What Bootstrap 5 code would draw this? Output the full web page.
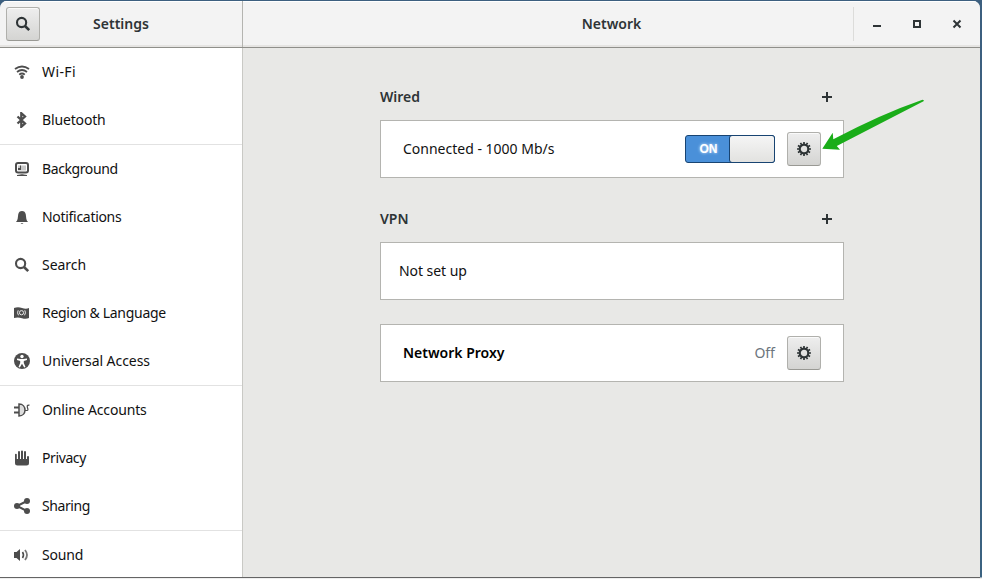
<!DOCTYPE html>
<html lang="en">
<head>
<meta charset="utf-8">
<title>Settings</title>
<link href="https://cdn.jsdelivr.net/npm/bootstrap@5.3.0/dist/css/bootstrap.min.css" rel="stylesheet">
<style>
body{font-family:"Noto Sans","Open Sans",sans-serif;font-size:14px;line-height:20px;color:#111;background:linear-gradient(#3c5f7f,#3b6280 577px,#eee 578px);height:579px;overflow:hidden}
.window{width:980px;height:577px;margin-top:1px;background:#e8e8e6;border-radius:7px 7px 0 0;border-bottom:1px solid #646464;overflow:hidden}
.titlebar{height:47px;background:#f3f3f3;border-bottom:1px solid #8f8f8a;box-shadow:inset 0 -2px #e5e4e2,inset 0 1px #fff;color:#2e3436;font-weight:600;flex:none}
.title-left{width:243px;border-right:1px solid #b4b4b0;padding-left:6px}
.title-left .caption{width:162px}
.tool{width:34px;height:34px;padding:0;border:1px solid #b0b0ac;border-bottom-color:#999994;border-radius:3px;background:linear-gradient(#eee,#d4d4d2);box-shadow:inset 0 1px #fafafa;color:#2e3436}
.controls{width:127px;height:34px;border-left:1px solid #dcdcda;padding-left:3px}
.controls span{width:40px;height:34px}
.side{width:243px;background:#fff;border-right:1px solid #c9c9c5;overflow:hidden}
.entry{height:48px;flex:none;padding-left:14px;color:#111;letter-spacing:-.3px}
.entry svg{width:16px;height:16px;color:#4d4d4d;margin-right:12px;flex:none}
.entry:nth-child(1){letter-spacing:.4px}
.entry:nth-child(2),.entry:nth-child(8),.entry:nth-child(11){letter-spacing:-.15px}
.entry:nth-child(3),.entry:nth-child(9),.entry:nth-child(10){letter-spacing:-.4px}
.entry:nth-child(5),.entry:nth-child(7){letter-spacing:-.05px}
.split{border-top:1px solid #e2e2e2;height:49px}
.panel{width:464px;margin-left:137px;padding-top:37px}
.heading{height:24px;color:#2e3436;font-weight:600;padding-right:10px;margin-bottom:11px}
.box + .heading{margin-top:29px}
.box{height:58px;background:#fff;border:1px solid #b4b4b0;padding:0 22px}
.box-plain{padding-left:18px;letter-spacing:-.05px}
.toggle{width:90px;height:28px;border:1px solid #184472;border-radius:3px;background:#4a90d9;margin-right:12px}
.toggle b{width:43px;font:600 12px "Liberation Sans",sans-serif;color:#fff;text-shadow:0 0 3px #d9ebff;text-align:center;padding-left:2px}
.knob{width:46px;height:28px;border:1px solid #184472;border-radius:3px;background:linear-gradient(#f5f5f5,#e2e2e0);margin-right:-1px}
.arrow{left:0;top:0;pointer-events:none}
</style>
<script src="https://cdn.jsdelivr.net/npm/bootstrap@5.3.0/dist/js/bootstrap.bundle.min.js"></script>
</head>
<body>
<svg class="d-none">
<symbol id="find" viewBox="0 0 16 16"><circle cx="6.6" cy="6.5" r="4.6" fill="none" stroke="currentColor" stroke-width="2.1"/><path d="M10 10l4.2 4.2" stroke="currentColor" stroke-width="2.6"/></symbol>
<symbol id="gear" viewBox="0 0 16 16"><circle cx="8" cy="8" r="4.300" fill="none" stroke="currentColor" stroke-width="2.200"/><path id="teeth" d="M8 1v3M8 12v3M1 8h3M12 8h3M4.500 1.940l1.300 2.250M10.200 11.810l1.300 2.250M1.940 4.500l2.250 1.300M11.810 10.200l2.250 1.300M11.500 1.940l-1.300 2.250M5.800 11.810l-1.300 2.250M14.060 4.500l-2.250 1.300M4.190 10.200l-2.250 1.300" stroke="currentColor" stroke-width="1.700"/></symbol>
<symbol id="plus" viewBox="0 0 14 14"><path d="M2 7h10M7 2v10" stroke="currentColor" stroke-width="2"/></symbol>
</svg>
<div class="window d-flex flex-column">
 <header class="titlebar d-flex">
  <div class="title-left d-flex align-items-center">
   <button class="tool btn d-flex align-items-center justify-content-center" aria-label="Search"><svg width="16" height="16"><use href="#find"/></svg></button>
   <span class="caption text-center">Settings</span>
  </div>
  <div class="flex-grow-1 d-flex align-items-center position-relative">
   <span class="w-100 text-center">Network</span>
   <div class="controls d-flex position-absolute end-0">
    <span><svg width="40" height="34"><path d="M16 19h8" stroke="#2e3436" stroke-width="2"/></svg></span>
    <span><svg width="40" height="34"><path d="M17 14h6v6h-6z" fill="none" stroke="#2e3436" stroke-width="2"/></svg></span>
    <span><svg width="40" height="34"><path d="M16.500 13.500l7 7M23.500 13.500l-7 7" stroke="#2e3436" stroke-width="2"/></svg></span>
   </div>
  </div>
 </header>
 <div class="d-flex flex-grow-1 overflow-hidden">
  <nav class="side d-flex flex-column">
   <div class="entry d-flex align-items-center"><svg viewBox="0 0 16 16" fill="none" stroke="currentColor"><path d="M1 5q7-5 14 0" stroke-width="1.900"/><path d="M3 8q5-4 10 0" stroke-width="1.800"/><path d="M5.200 10.700q2.800-2.400 5.600 0" stroke-width="1.700"/><circle cx="8" cy="13" r="1.900" fill="currentColor" stroke="none"/></svg><span>Wi-Fi</span></div>
   <div class="entry d-flex align-items-center"><svg viewBox="0 0 16 16"><path d="M3.500 4.500l7.500 7-3.700 3.300V1.200L11 4.500l-7.500 7" fill="none" stroke="currentColor" stroke-width="2.300"/></svg><span>Bluetooth</span></div>
   <div class="entry split d-flex align-items-center"><svg viewBox="0 0 16 16"><rect x="2" y="2" width="12" height="9.500" rx="2" fill="#fff" stroke="currentColor" stroke-width="2"/><path d="M4 4.500h8v5H4z" fill="#c8c8c8"/><path d="M4 9V7h2V4.500h1V9z" fill="currentColor"/><path d="M3 14.500q5-1.500 10 0z" fill="currentColor" stroke="currentColor"/></svg><span>Background</span></div>
   <div class="entry d-flex align-items-center"><svg viewBox="0 0 16 16"><path d="M2 13c2-2 1.700-4 2.200-7.500C4.600 3 6 2 8 2s3.400 1 3.800 3.500C12.300 9 12 11 14 13zM6.500 14h3L8 15z" fill="currentColor"/></svg><span>Notifications</span></div>
   <div class="entry d-flex align-items-center"><svg><use href="#find"/></svg><span>Search</span></div>
   <div class="entry d-flex align-items-center"><svg viewBox="0 0 16 16"><path d="M0 3q4-1.500 8 0t7 0v10q-3 1.500-7 .2T0 13z" fill="currentColor"/><g fill="none" stroke="#e8e8e8"><circle cx="7.500" cy="7.700" r="2.100"/><path d="M4.200 5.300q-1.500 2.500.3 5M10.800 5.300q1.500 2.500-.3 5"/></g></svg><span>Region &amp; Language</span></div>
   <div class="entry d-flex align-items-center"><svg viewBox="0 0 16 16"><circle cx="8" cy="8" r="8" fill="currentColor"/><circle cx="8" cy="3.500" r="1.700" fill="#fff"/><path d="M3 5.500l3.700.5h2.600l3.700-.5v1.400L9.800 8v2l1.700 4-1.300.5L8 10.800l-2.200 3.700-1.300-.5 1.700-4V8L3 6.900z" fill="#fff"/></svg><span>Universal Access</span></div>
   <div class="entry split d-flex align-items-center"><svg viewBox="0 0 16 16"><path d="M5 2c8 0 8 12 0 12z" fill="#ddd" stroke="currentColor" stroke-width="1.500"/><path d="M0 5.500h5M0 10.500h5" stroke="currentColor" stroke-width="2"/><path d="M11 8.500h2q1.300-.3.800-1.700T13.200 4q.3-1 2.300-.8" fill="none" stroke="currentColor" stroke-width="1.200"/></svg><span>Online Accounts</span></div>
   <div class="entry d-flex align-items-center"><svg viewBox="0 0 16 16"><path d="M1 4.500q0-.8.900-.8t.9.800V9H4V2q0-1 1-1t1 1v7h1V1.500Q7 .5 8 .5t1 1V9h1V2q0-1 1-1t1 1v7h1V7q0-1 1-1t1 1v6q0 2.500-2.500 2.500h-9Q1 15.500 1 13z" fill="currentColor"/></svg><span>Privacy</span></div>
   <div class="entry d-flex align-items-center"><svg viewBox="0 0 16 16" fill="currentColor"><path d="M13 3L3 8l10 5" fill="none" stroke="currentColor" stroke-width="2"/><circle cx="3" cy="8" r="3"/><circle cx="13" cy="3" r="3"/><circle cx="13" cy="13" r="3"/></svg><span>Sharing</span></div>
   <div class="entry split d-flex align-items-center"><svg viewBox="0 0 16 16"><path d="M0 5h2.500L6 2v12l-3.500-3H0z" fill="currentColor"/><path d="M8.500 5q2 3 0 6" fill="none" stroke="currentColor" stroke-width="1.600"/><path d="M11 3q4 5 0 10" fill="none" stroke="#777" stroke-width="1.800"/></svg><span>Sound</span></div>
  </nav>
  <main class="flex-grow-1">
   <div class="panel">
    <div class="heading d-flex align-items-center justify-content-between"><span>Wired</span><svg width="14" height="14"><use href="#plus"/></svg></div>
    <div class="box d-flex align-items-center"><span class="me-auto">Connected - 1000 Mb/s</span>
     <div class="toggle d-flex align-items-center justify-content-between"><b>ON</b><span class="knob"></span></div>
     <button class="tool btn d-flex align-items-center justify-content-center" aria-label="Wired options"><svg width="16" height="16"><use href="#gear"/></svg></button></div>
    <div class="heading d-flex align-items-center justify-content-between"><span>VPN</span><svg width="14" height="14"><use href="#plus"/></svg></div>
    <div class="box box-plain d-flex align-items-center mb-4"><span>Not set up</span></div>
    <div class="box d-flex align-items-center"><span class="fw-semibold me-auto text-black">Network Proxy</span><span class="text-secondary me-2 pe-1">Off</span>
     <button class="tool btn d-flex align-items-center justify-content-center" aria-label="Proxy options"><svg width="16" height="16"><use href="#gear"/></svg></button></div>
   </div>
  </main>
 </div>
</div>
<svg class="arrow position-absolute" width="982" height="579"><path d="M822.300 148.700L832.700 132.700L833.300 139.300Q881 114 922.500 99.700Q924.500 99.700 923.500 101.300L836.800 146L840 149.700Z" fill="#1aad19"/></svg>
</body>
</html>
